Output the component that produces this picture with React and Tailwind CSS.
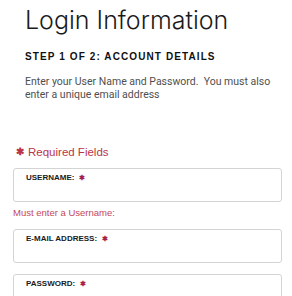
import React from 'react';

const Star = ({ className = '' }) => (
  <span className={`font-bold ${className}`}>✱</span>
);

const Field = ({ label }) => (
  <div className="h-[34px] rounded-[3px] border border-[#d4d4d4] bg-white px-3 pt-[3px]">
    <div className="flex items-center gap-[5px] text-[8px] font-bold text-[#1a1a1a]">
      {label}
      <Star className="text-[7px] text-[#a3204f]" />
    </div>
  </div>
);

export default function App() {
  return (
    <div className="min-h-screen bg-white pl-[13px] pr-[10px] font-['Liberation_Sans',Arial,sans-serif]">
      <div className="pl-3">
        <h1 className="pt-[4px] font-['Inter',sans-serif] text-[25px] font-light leading-[32px] text-[#1a1a1a]">
          Login Information
        </h1>
        <h2 className="mt-[15px] text-[10px] font-bold leading-[12px] tracking-[1.1px] text-[#111]">
          STEP 1 OF 2: ACCOUNT DETAILS
        </h2>
        <p className="mt-[12px] font-['Roboto',sans-serif] text-[10.5px] leading-[13px] text-[#4f4f4f]">
          Enter your User Name and Password.&nbsp; You must also enter a unique email address
        </p>
      </div>

      <div className="mt-[44px] flex items-center gap-[4px] pl-[3px] text-[11.5px] leading-[14px] text-[#b8354a]">
        <Star className="text-[10px]" />
        <span>Required Fields</span>
      </div>

      <div className="mt-[9px]">
        <Field label="USERNAME:" />
      </div>
      <div className="mt-[5px] text-[9.5px] leading-[12px] text-[#c5475a]">
        Must enter a Username:
      </div>
      <div className="mt-[10px]">
        <Field label="E-MAIL ADDRESS:" />
      </div>
      <div className="mt-[11px]">
        <Field label="PASSWORD:" />
      </div>
    </div>
  );
}
